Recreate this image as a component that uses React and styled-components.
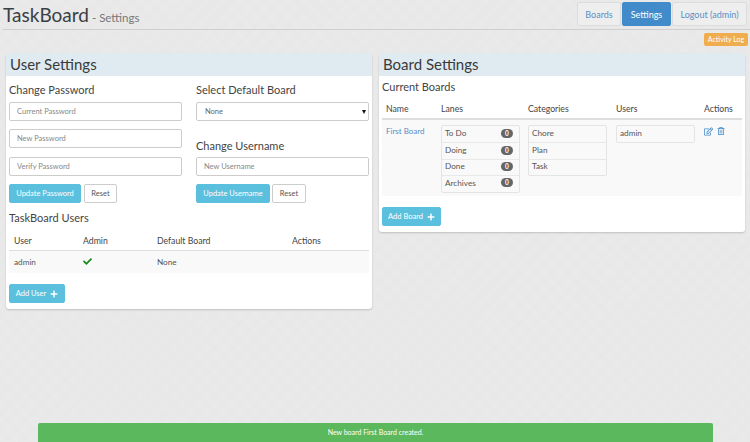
import React from "react";
import styled, { createGlobalStyle } from "styled-components";
import { FaCheck, FaPlus, FaRegEdit, FaRegTrashAlt } from "react-icons/fa";

const Global = createGlobalStyle`
    html, body {
        margin: 0;
        height: 100%;
    }
    body {
        font-family: "Lato", "Open Sans", sans-serif;
        color: #333;
        background-color: #e9e9e9;
        background-image:
            repeating-linear-gradient(45deg, rgba(255,255,255,.1) 0 1px, transparent 1px 2px),
            repeating-linear-gradient(-45deg, rgba(0,0,0,.012) 0 1px, transparent 1px 2px);
    }
    * { box-sizing: border-box; }
`;

const Page = styled.div`
    width: 750px;
    height: 442px;
    overflow: hidden;
`;

const Header = styled.header`
    height: 30px;
    margin-left: 3px;
    padding-right: 3px;
    border-bottom: 1px solid #cfcfcf;
    display: flex;
    justify-content: space-between;
    align-items: flex-start;
`;

const Title = styled.h1`
    margin: 3px 0 0;
    font-size: 19px;
    line-height: 24px;
    font-weight: 400;
    color: #3a3f44;
`;

const SubTitle = styled.small`
    font-size: 11.5px;
    margin-left: 3px;
    color: #777;
`;

const Nav = styled.nav`
    display: flex;
    gap: 1px;
    margin-top: 2px;
`;

const NavLink = styled.a`
    height: 24px;
    width: ${(p) => p.$w}px;
    display: flex;
    align-items: center;
    justify-content: center;
    font-size: 9px;
    border-radius: 2px;
    border: 1px solid ${(p) => (p.$active ? "#428bca" : "#dcdcdc")};
    background: ${(p) => (p.$active ? "#428bca" : "#eee")};
    color: ${(p) => (p.$active ? "#fff" : "#5b8ec4")};
`;

const LogRow = styled.div`
    display: flex;
    justify-content: flex-end;
    padding: 3px 2px 0 0;
    height: 23px;
`;

const LogBadge = styled.span`
    width: 44px;
    height: 13px;
    background: #f0ad4e;
    color: #fff;
    border-radius: 2px;
    font-size: 7px;
    line-height: 13px;
    text-align: center;
`;

const Columns = styled.main`
    display: flex;
    gap: 7px;
    padding-left: 6px;
    align-items: flex-start;
`;

const Panel = styled.section`
    width: 366px;
    background: #fff;
    border-radius: 3px;
    box-shadow: 0 1px 2px rgba(0, 0, 0, 0.18);
    overflow: hidden;
`;

const PanelHead = styled.h2`
    margin: 0;
    height: 23px;
    padding-left: 4px;
    background: #dfebf1;
    font-size: 15px;
    line-height: 23px;
    font-weight: 400;
    color: #3a3a3a;
`;

const UserBody = styled.div`
    padding: 7px 3px 6px 3px;
`;

const FormGrid = styled.div`
    display: grid;
    grid-template-columns: 173px 173px;
    column-gap: 14px;
`;

const FormCol = styled.div`
    display: flex;
    flex-direction: column;
`;

const SectionTitle = styled.h4`
    margin: 0;
    padding-top: ${(p) => p.$top || 0}px;
    height: ${(p) => p.$h || 14}px;
    font-size: 11px;
    line-height: 14px;
    font-weight: 400;
    color: #444;
`;

const TextInput = styled.input`
    display: block;
    width: 100%;
    height: 19px;
    margin-top: ${(p) => p.$top || 0}px;
    padding: 0 7px;
    font: 7.5px "Lato", sans-serif;
    border: 1px solid #ccc;
    border-radius: 2px;
    background: #fff;
    &::placeholder {
        color: #888;
        opacity: 1;
    }
`;

const SelectWrap = styled.div`
    position: relative;
    margin-top: 5px;
    &::after {
        content: "";
        position: absolute;
        right: 3px;
        top: 8px;
        border-left: 2px solid transparent;
        border-right: 2px solid transparent;
        border-top: 4px solid #111;
    }
`;

const Select = styled.select`
    display: block;
    width: 100%;
    height: 19px;
    padding: 0 8px;
    appearance: none;
    font: 7.5px "Lato", sans-serif;
    color: #666;
    border: 1px solid #ccc;
    border-radius: 2px;
    background: #fff;
`;

const ButtonRow = styled.div`
    display: flex;
    gap: ${(p) => p.$gap || 3}px;
    margin-top: 8px;
`;

const Button = styled.button`
    height: 19px;
    width: ${(p) => p.$w}px;
    padding: 0;
    display: flex;
    align-items: center;
    justify-content: center;
    gap: 4px;
    font: 7.5px "Lato", sans-serif;
    border-radius: 2px;
    border: 1px solid ${(p) => (p.$plain ? "#ccc" : "#5bc0de")};
    background: ${(p) => (p.$plain ? "#fff" : "#5bc0de")};
    color: ${(p) => (p.$plain ? "#555" : "#fff")};
`;

const UsersTitle = styled(SectionTitle)`
    margin: 8px 0 0;
`;

const UserTable = styled.div`
    margin-top: 5px;
    width: 360px;
`;

const UserRow = styled.div`
    display: grid;
    grid-template-columns: 69px 74px 135px 1fr;
    align-items: center;
    padding-left: 5px;
    font-size: ${(p) => (p.$head ? 8.7 : 8.2)}px;
    height: ${(p) => p.$h}px;
    background: ${(p) => (p.$stripe ? "#f9f9f9" : "transparent")};
    color: ${(p) => (p.$stripe ? "#555" : "#444")};
    border-bottom: ${(p) => (p.$head ? "1px solid #ddd" : "0")};
`;

const AddRow = styled.div`
    margin-top: 11px;
`;

const BoardBody = styled.div`
    padding: 4px 3px 6px 3px;
`;

const BoardTable = styled.div`
    margin-top: 5px;
    width: 360px;
`;

const BoardGrid = styled.div`
    display: grid;
    grid-template-columns: 55px 87px 88px 88px 1fr;
    padding-left: 4px;
`;

const BoardHead = styled(BoardGrid)`
    height: 21px;
    font-size: 8.7px;
    color: #444;
    align-items: center;
    border-bottom: 2px solid #ddd;
`;

const BoardRow = styled(BoardGrid)`
    background: #f9f9f9;
    height: 76px;
    padding-top: 5px;
    font-size: 8px;
`;

const BoardName = styled.a`
    color: #5b8ec4;
    padding-top: 1px;
`;

const List = styled.ul`
    margin: 0;
    padding: 0;
    list-style: none;
    width: 79px;
    align-self: start;
    border: 1px solid #e4e4e4;
    border-radius: 2px;
`;

const Item = styled.li`
    height: 16.4px;
    padding: 0 6px 2px 3px;
    display: flex;
    align-items: center;
    justify-content: space-between;
    font-size: 8.2px;
    color: #555;
    & + & {
        border-top: 1px solid #e8e8e8;
    }
`;

const Badge = styled.span`
    width: 12px;
    height: 9px;
    border-radius: 5px;
    background: #666;
    color: #fff;
    font-size: 6.5px;
    font-weight: 700;
    line-height: 9px;
    text-align: center;
`;

const Actions = styled.div`
    display: flex;
    align-items: flex-start;
    gap: 4px;
    padding-top: 2px;
    color: #428bca;
    font-size: 9px;
`;

const Toast = styled.div`
    position: fixed;
    left: 38px;
    bottom: 0;
    width: 675px;
    height: 19px;
    background: #5cb85c;
    color: #fff;
    font-size: 7px;
    line-height: 19px;
    text-align: center;
    border-radius: 2px 2px 0 0;
`;

const App = () => {
    return (
        <Page>
            <Global />
            <Header>
                <Title>
                    TaskBoard<SubTitle>- Settings</SubTitle>
                </Title>
                <Nav>
                    <NavLink $w={44}>Boards</NavLink>
                    <NavLink $w={49} $active>
                        Settings
                    </NavLink>
                    <NavLink $w={75}>Logout (admin)</NavLink>
                </Nav>
            </Header>
            <LogRow>
                <LogBadge>Activity Log</LogBadge>
            </LogRow>
            <Columns>
                <Panel>
                    <PanelHead>User Settings</PanelHead>
                    <UserBody>
                        <FormGrid>
                            <FormCol>
                                <SectionTitle>Change Password</SectionTitle>
                                <TextInput $top={5} placeholder="Current Password" />
                                <TextInput $top={8} placeholder="New Password" />
                                <TextInput $top={9} placeholder="Verify Password" />
                                <ButtonRow>
                                    <Button $w={72}>Update Password</Button>
                                    <Button $w={33} $plain>
                                        Reset
                                    </Button>
                                </ButtonRow>
                            </FormCol>
                            <FormCol>
                                <SectionTitle>Select Default Board</SectionTitle>
                                <SelectWrap>
                                    <Select defaultValue="None">
                                        <option>None</option>
                                    </Select>
                                </SelectWrap>
                                <SectionTitle $top={18} $h={36}>
                                    Change Username
                                </SectionTitle>
                                <TextInput placeholder="New Username" />
                                <ButtonRow $gap={2}>
                                    <Button $w={74}>Update Username</Button>
                                    <Button $w={34} $plain>
                                        Reset
                                    </Button>
                                </ButtonRow>
                            </FormCol>
                        </FormGrid>
                        <UsersTitle>TaskBoard Users</UsersTitle>
                        <UserTable>
                            <UserRow $h={21} $head>
                                <span>User</span>
                                <span>Admin</span>
                                <span>Default Board</span>
                                <span>Actions</span>
                            </UserRow>
                            <UserRow $h={22} $stripe>
                                <span>admin</span>
                                <span>
                                    <FaCheck color="#1a8a1a" size={9} />
                                </span>
                                <span>None</span>
                                <span />
                            </UserRow>
                        </UserTable>
                        <AddRow>
                            <Button $w={56}>
                                Add User <FaPlus size={8} />
                            </Button>
                        </AddRow>
                    </UserBody>
                </Panel>
                <Panel>
                    <PanelHead>Board Settings</PanelHead>
                    <BoardBody>
                        <SectionTitle>Current Boards</SectionTitle>
                        <BoardTable>
                            <BoardHead>
                                <span>Name</span>
                                <span>Lanes</span>
                                <span>Categories</span>
                                <span>Users</span>
                                <span>Actions</span>
                            </BoardHead>
                            <BoardRow>
                                <BoardName>First Board</BoardName>
                                <List>
                                    {["To Do", "Doing", "Done", "Archives"].map((lane) => (
                                        <Item key={lane}>
                                            {lane}
                                            <Badge>0</Badge>
                                        </Item>
                                    ))}
                                </List>
                                <List>
                                    {["Chore", "Plan", "Task"].map((c) => (
                                        <Item key={c}>{c}</Item>
                                    ))}
                                </List>
                                <List>
                                    <Item>admin</Item>
                                </List>
                                <Actions>
                                    <FaRegEdit />
                                    <FaRegTrashAlt size={8} />
                                </Actions>
                            </BoardRow>
                        </BoardTable>
                        <AddRow>
                            <Button $w={59}>
                                Add Board <FaPlus size={8} />
                            </Button>
                        </AddRow>
                    </BoardBody>
                </Panel>
            </Columns>
            <Toast>New board First Board created.</Toast>
        </Page>
    );
};

export default App;
